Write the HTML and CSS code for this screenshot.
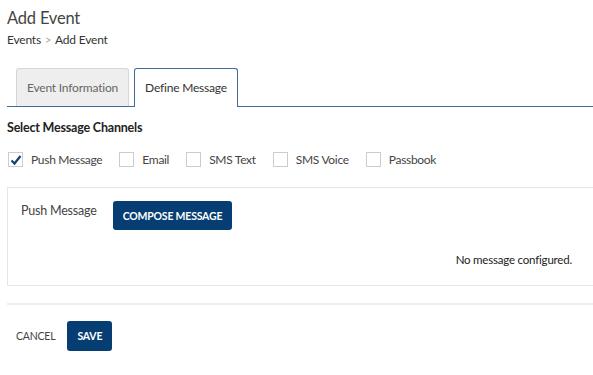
FILE: index.html
```html
<!DOCTYPE html>
<html>
<head>
  <title>Add Event</title>
  <link rel="stylesheet" href="styles.css">
</head>
<body>
  <div class="page">
    <h1 class="title">Add Event</h1>
    <div class="crumbs">
      <a href="#">Events</a>
      <span class="sep">&gt;</span>
      <span>Add Event</span>
    </div>

    <div class="tabs">
      <div class="tab">Event Information</div>
      <div class="tab active">Define Message</div>
    </div>

    <h2 class="section-title">Select Message Channels</h2>
    <div class="channels">
      <label class="channel"><span class="box checked">
        <svg width="12" height="12" viewBox="0 0 12 12"><path d="M1.5 6.5 L4.5 9.5 L10.5 2" fill="none" stroke="#163f72" stroke-width="2.2"/></svg>
      </span>Push Message</label>
      <label class="channel"><span class="box"></span>Email</label>
      <label class="channel"><span class="box"></span>SMS Text</label>
      <label class="channel"><span class="box"></span>SMS Voice</label>
      <label class="channel"><span class="box"></span>Passbook</label>
    </div>

    <div class="panel">
      <div class="panel-row">
        <span class="panel-label">Push Message</span>
        <button class="btn">COMPOSE MESSAGE</button>
      </div>
      <div class="status">No message configured.</div>
    </div>

    <div class="actions">
      <button class="link-btn">CANCEL</button>
      <button class="btn">SAVE</button>
    </div>
  </div>
</body>
</html>
```

FILE: styles.css
```css
body {
  font-family: Lato, "Open Sans", sans-serif;
  background-color: #fff;
  color: #333;
  margin: 0;
  padding: 0;
  overflow: hidden;
  letter-spacing: -0.2px;
}

.page {
  width: 600px;
  padding: 7px 0 0 7px;
}

.title {
  font-size: 16.5px;
  font-weight: normal;
  color: #444;
  margin: 0;
  line-height: 22px;
}

.crumbs {
  font-size: 12px;
  color: #333;
  margin-top: 3px;
  line-height: 16px;
}

.crumbs a {
  color: #333;
  text-decoration: none;
}

.crumbs .sep {
  color: #aaa;
  margin: 0 1px;
}

.tabs {
  display: flex;
  gap: 5px;
  margin-top: 20px;
  padding-left: 9px;
  border-bottom: 1px solid #3f6b99;
  height: 38px;
}

.tab {
  font-size: 12px;
  color: #666;
  background-color: #eee;
  border: 1px solid #d6d6d6;
  border-bottom: none;
  border-radius: 3px 3px 0 0;
  padding: 0 10px;
  line-height: 37px;
  height: 37px;
}

.tab.active {
  background-color: #fff;
  color: #333;
  border-color: #3f6b99;
  height: 38px;
  margin-bottom: -1px;
}

.section-title {
  font-size: 12.5px;
  font-weight: bold;
  color: #222;
  margin: 12px 0 0 0;
  line-height: 18px;
}

.channels {
  display: flex;
  align-items: center;
  margin-top: 15px;
}

.channel {
  display: flex;
  align-items: center;
  font-size: 12px;
  letter-spacing: -0.3px;
  color: #444;
  margin-right: 16px;
}

.box {
  width: 13px;
  height: 13px;
  border: 1px solid #ccc;
  margin: 0 8px 0 1px;
  display: flex;
  align-items: center;
  justify-content: center;
}

.panel {
  margin-top: 20px;
  border: 1px solid #e6e6e6;
  padding: 13px 34px 0 13px;
  box-sizing: border-box;
  height: 99px;
}

.panel-row {
  display: flex;
  align-items: flex-start;
}

.panel-label {
  font-size: 12.5px;
  color: #444;
  margin-right: 16px;
  margin-top: 2px;
}

.btn {
  background-color: #063d73;
  color: #fff;
  border: none;
  border-radius: 3px;
  font-family: Lato, sans-serif;
  font-size: 10.5px;
  font-weight: bold;
  letter-spacing: -0.2px;
  padding: 0 10px;
  height: 29px;
  cursor: pointer;
}

.status {
  text-align: right;
  font-size: 11.5px;
  color: #222;
  margin-top: 23px;
}

.actions {
  border-top: 2px solid #eee;
  margin-top: 17px;
  padding: 16px 0 0 9px;
  display: flex;
  align-items: center;
  gap: 12px;
}

.actions .btn {
  height: 30px;
  padding: 0 10px;
}

.link-btn {
  background: none;
  border: none;
  padding: 0;
  font-family: Lato, sans-serif;
  font-size: 10.5px;
  letter-spacing: -0.2px;
  color: #444;
  cursor: pointer;
}
```
